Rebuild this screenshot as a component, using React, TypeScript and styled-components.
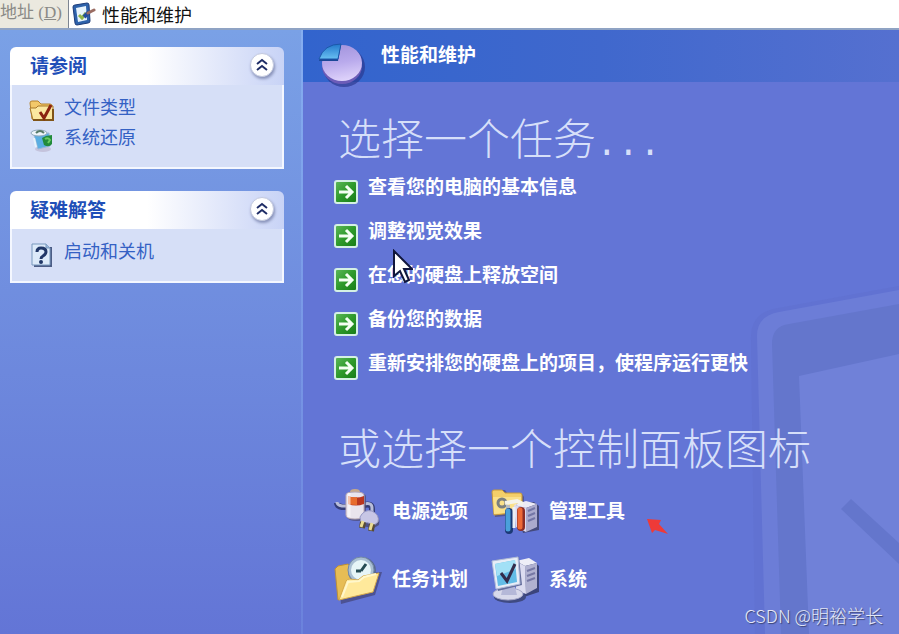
import React from "react";
import styled, { createGlobalStyle } from "styled-components";

const GlobalStyle = createGlobalStyle`
  *, *::before, *::after { box-sizing: border-box; }
  body {
    margin: 0;
    background: #6375d6;
    font-family: "Liberation Sans", "Noto Sans CJK SC", sans-serif;
  }
  h1, h2, ul { margin: 0; padding: 0; }
  ul { list-style: none; }
  svg { display: block; flex: none; }
`;

const Window = styled.div`
  display: flex;
  flex-direction: column;
  min-height: 100vh;
  position: relative;
  overflow: hidden;
`;

const AddressBar = styled.div`
  display: flex;
  height: 30px;
  background: #fff;
  border-bottom: 2px solid #8fa3c4;
`;

const AddressLabel = styled.label`
  width: 69px;
  flex: none;
  background: #ebe9df;
  border-right: 1px solid #7d8591;
  color: #8a8a86;
  font-family: "Liberation Serif", "Noto Sans CJK SC", serif;
  font-size: 17px;
  line-height: 26px;
  white-space: nowrap;
`;

const AddressField = styled.div`
  flex: 1;
  display: flex;
  align-items: center;
  gap: 4px;
  padding-left: 3px;
`;

const AddressInput = styled.input`
  flex: 1;
  min-width: 0;
  border: 0;
  outline: 0;
  padding: 0 0 0 2px;
  background: transparent;
  color: #111;
  font-family: "Noto Sans CJK SC", sans-serif;
  font-size: 18px;
  line-height: 26px;
`;

const Body = styled.div`
  flex: 1;
  display: flex;
`;

const Sidebar = styled.aside`
  width: 301px;
  flex: none;
  display: flex;
  flex-direction: column;
  gap: 22px;
  padding: 17px 17px 17px 10px;
  background: linear-gradient(#7aa1e6, #6375d6);
`;

const Panel = styled.section`
  border-radius: 6px 6px 0 0;
  overflow: hidden;
`;

const PanelHeader = styled.div`
  display: flex;
  align-items: center;
  justify-content: space-between;
  height: 38px;
  padding: 0 10px 3px 20px;
  background: linear-gradient(90deg, #fff 50%, #c8d3f6);
`;

const PanelTitle = styled.h2`
  padding-top: 4px;
  color: #1f4fb8;
  font-size: 19px;
  line-height: 24px;
  font-weight: 700;
`;

const CollapseButton = styled.button`
  width: 24px;
  height: 24px;
  padding: 0;
  display: grid;
  place-items: center;
  border: 1px solid #c3c9de;
  border-radius: 50%;
  background: #fff;
  box-shadow: 1px 2px 3px #8791b8;
`;

const PanelLinks = styled.ul`
  display: flex;
  flex-direction: column;
  gap: 6px;
  padding: 11px 17px 17px;
  background: #d6dff7;
  border: 2px solid #f4f7ff;
  border-top: 0;
`;

const PanelLink = styled.a`
  display: flex;
  align-items: center;
  gap: 10px;
  height: 24px;
  color: #3461c4;
  font-size: 18px;
  line-height: 24px;
  text-decoration: none;

  svg { margin-top: 5px; }
`;

const Main = styled.main`
  flex: 1;
  min-width: 0;
  position: relative;
  display: flex;
  flex-direction: column;
  background: #6375d6;
`;

const Divider = styled.div`
  width: 2px;
  flex: none;
  background: linear-gradient(#86aef0, #6b82dc);
`;

const MainHeader = styled.header`
  display: flex;
  align-items: flex-start;
  gap: 13px;
  height: 52px;
  padding: 12px 15px 0;
  background: linear-gradient(90deg, #3264cd, #4068cd 50%, #5570d0);
`;

const MainTitle = styled.h1`
  color: #fff;
  font-size: 19px;
  line-height: 28px;
  font-weight: 700;
`;

const Backdrop = styled.svg`
  position: absolute;
  right: 0;
  bottom: 0;
`;

const Content = styled.div`
  position: relative;
  padding: 24px 31px 24px;
`;

const Heading = styled.h2`
  height: 60px;
  padding-left: 4px;
  color: #d6dff9;
  font-family: "Noto Sans CJK SC", sans-serif;
  font-size: 43px;
  line-height: 60px;
  font-weight: 300;
  white-space: nowrap;
`;

const Dots = styled.span`
  font-family: "Liberation Mono", monospace;
  font-size: 36px;
  line-height: 24px;
`;

const TaskList = styled.ul`
  display: flex;
  flex-direction: column;
  gap: 20px;
  margin: 14px 0 36px;
`;

const TaskLink = styled.a`
  display: flex;
  align-items: flex-start;
  gap: 10px;
  height: 24px;
  color: #fff;
  font-size: 19px;
  line-height: 16px;
  font-weight: 700;
  text-decoration: none;
  white-space: nowrap;
`;

const AppletGrid = styled.ul`
  display: grid;
  grid-template-columns: 157px 157px;
  gap: 20px 0;
  margin-top: 12px;
`;

const AppletLink = styled.a`
  display: flex;
  align-items: center;
  gap: 10px;
  height: 48px;
  color: #fff;
  font-size: 19px;
  line-height: 24px;
  font-weight: 700;
  text-decoration: none;
  white-space: nowrap;
`;

const Pointer = styled.svg`
  position: absolute;
  left: 391px;
  top: 249px;
`;

const RedMarker = styled.svg`
  position: absolute;
  left: 646px;
  top: 517px;
`;

const Credit = styled.div`
  position: absolute;
  right: 16px;
  bottom: 7px;
  color: #e4e8f6;
  font-family: "Noto Sans CJK SC", sans-serif;
  font-size: 18px;
  line-height: 24px;
  font-weight: 300;
  text-shadow: 1px 1px 1px #39426f;
`;

const ClipboardIcon = () => (
  <svg width="24" height="26" viewBox="0 0 24 26">
    <path d="M3 4 L15 2 Q17 2 17 4 L18 20 Q18 22 16 22 L5 24 Q3 24 3 22 L1 6 Q1 4 3 4Z" fill="#2d62ab" stroke="#1c3b78" />
    <path d="M4 7 L14 5 L15 19 L6 21Z" fill="#e6f3fd" />
    <path d="M7 14l3 3 4-5" fill="none" stroke="#92b648" strokeWidth="3" />
    <path d="M12 16 L17 11" stroke="#244d9c" strokeWidth="4" />
    <path d="M16 12 L22 9" stroke="#9a6c62" strokeWidth="3" strokeLinecap="round" />
  </svg>
);

const ChevronsIcon = () => (
  <svg width="12" height="14" viewBox="0 0 12 14" fill="none" stroke="#1f2d66" strokeWidth="2">
    <path d="M1 6l5-4 5 4M1 12l5-4 5 4" />
  </svg>
);

const FolderCheckIcon = () => (
  <svg width="25" height="22" viewBox="0 0 25 22">
    <path d="M1 3Q1 1 3 1h6l3 3h9q2 0 2 2v13H3Z" fill="#f2c869" stroke="#b5822d" />
    <path d="M1 8h6l2-2h15v14H4Z" fill="#fbe7a0" stroke="#a8782a" />
    <path d="M4 20h20V9" fill="none" stroke="#805418" strokeWidth="2" />
    <path d="M11 12l4 6 7-13" fill="none" stroke="#8c2412" strokeWidth="3" />
  </svg>
);

const RestoreIcon = () => (
  <svg width="25" height="24" viewBox="0 0 25 24">
    <ellipse cx="14" cy="20" rx="8" ry="3" fill="#c4c3dc" />
    <path d="M5 6l15-2 1 13-12 3Z" fill="#5aaee2" stroke="#97b8d8" />
    <ellipse cx="10" cy="4" rx="8" ry="3" fill="#eef4fa" stroke="#91a9bc" />
    <path d="M7 4q4-4 8 0" fill="none" stroke="#587b6a" strokeWidth="2" />
    <path d="M5 9l2 9" stroke="#e6f3fb" strokeWidth="2" />
    <path d="M13 9l4-2 6-1v9q-3 4-8 1Z" fill="#218b3b" />
    <path d="M16 10q3-2 5 1l-2 3" fill="none" stroke="#69cc61" strokeWidth="2" />
  </svg>
);

const HelpIcon = () => (
  <svg width="25" height="25" viewBox="0 0 25 25">
    <path d="M5 24h17V5" fill="none" stroke="#4c5d86" strokeWidth="2" />
    <path d="M3 2h14l4 4v17H3Z" fill="#dceaf9" stroke="#7898bd" />
    <path d="M17 2v4h4" fill="#9cb8dc" stroke="#7898bd" />
    <path d="M8 10q0-4 4-4 5 0 5 4 0 2-3 4-2 1-2 3" fill="none" stroke="#203767" strokeWidth="3" />
    <circle cx="12" cy="20" r="2" fill="#203767" />
  </svg>
);

const PieIcon = () => (
  <svg width="50" height="46" viewBox="0 0 50 46">
    <defs>
      <linearGradient id="pieTop" x1="0.3" y1="0" x2="0.5" y2="1">
        <stop offset="0" stopColor="#a294dc" />
        <stop offset=".5" stopColor="#b9aaec" />
        <stop offset="1" stopColor="#dfd3fb" />
      </linearGradient>
      <linearGradient id="pieSlice" x1="0" y1="0" x2="0" y2="1">
        <stop offset="0" stopColor="#2278cc" />
        <stop offset="1" stopColor="#69c0f2" />
      </linearGradient>
    </defs>
    <ellipse cx="26" cy="25" rx="21" ry="20" fill="#29368c" opacity=".65" />
    <ellipse cx="24" cy="24" rx="20" ry="18" fill="#6c5cb8" />
    <ellipse cx="24" cy="21" rx="20" ry="18" fill="url(#pieTop)" />
    <path d="M23 3l-3 16H1Q5 5 23 3Z" fill="#1b4797" />
    <path d="M23 2l-3 15H1Q6 2 23 2Z" fill="url(#pieSlice)" stroke="#1b57aa" />
  </svg>
);

const ArrowIcon = () => (
  <svg width="24" height="24" viewBox="0 0 24 24">
    <defs>
      <linearGradient id="goFill" x1="0" y1="0" x2="1" y2="1">
        <stop offset="0" stopColor="#5fb95b" />
        <stop offset=".5" stopColor="#2e9a2b" />
        <stop offset="1" stopColor="#167a16" />
      </linearGradient>
    </defs>
    <rect x="1" y="1" width="22" height="22" rx="2" fill="url(#goFill)" stroke="#d4f0e4" strokeWidth="2" />
    <path d="M5 12h12M12 6l6 6-6 6" fill="none" stroke="#f4fff2" strokeWidth="3" />
  </svg>
);

const PowerIcon = () => (
  <svg width="48" height="48" viewBox="0 0 48 48">
    <path d="M14 19H8q-5-1-5-4M30 17q8-2 8 4v6" fill="none" stroke="#333c78" strokeWidth="6" />
    <path d="M14 18H8q-5-1-5-4M30 16q8-2 8 4v6" fill="none" stroke="#b8bdd8" strokeWidth="3" />
    <path d="M14 6h15q3 0 3 3v20q0 4-9 4t-10-4Z" fill="#4c4871" opacity=".7" />
    <path d="M16 4q0-3 5-3t5 3Z" fill="#c8a98a" />
    <path d="M12 7q0-3 9-3t9 3v20q0 4-9 4t-9-4Z" fill="#e9e4ed" stroke="#b9a9b5" />
    <path d="M14 8q8 3 16 0v8q-8 3-16 0Z" fill="#b9361f" />
    <path d="M14 8q4 2 9 1v8q-5 0-9-1Z" fill="#e76b2d" />
    <path d="M15 5v24" stroke="#fff" strokeWidth="3" opacity=".6" />
    <path d="M27 30q4-8 12-6 8 4 6 13l-5 3-13-2Z" fill="#4f5285" />
    <path d="M26 29q4-8 12-6 8 4 6 11l-5 4q-4-5-12-3Z" fill="#c7c6e5" stroke="#9698c5" />
    <path d="M29 34l-1 6M38 36l-1 7" stroke="#594b32" strokeWidth="6" />
    <path d="M29 33l-2 6M38 35l-2 7" stroke="#eadb91" strokeWidth="3" />
  </svg>
);

const ToolsIcon = () => (
  <svg width="48" height="48" viewBox="0 0 48 48">
    <path d="M3 5l3-3h8l3 4h14l2 3v17L4 29Z" fill="#4b4365" opacity=".6" />
    <path d="M1 4q0-2 2-2h8l3 3h15q2 0 2 2v17L3 27Z" fill="#f4cf69" stroke="#c79a3d" />
    <path d="M2 9h28l-1 14-26 3Z" fill="#fbe18a" />
    <path d="M25 16l18-2 5 4v24l-16 3Z" fill="#444a7c" />
    <path d="M23 17l12-4 11 3-11 4Z" fill="#ecebf6" />
    <path d="M35 20l11-4v23l-11 5Z" fill="#aaaacd" />
    <path d="M23 17l12 3v24l-10-5Z" fill="#dcdaf0" />
    <path d="M37 23l7-3M37 28l7-3M37 33l7-3" stroke="#7376a6" strokeWidth="2" />
    <circle cx="11" cy="15" r="4" fill="none" stroke="#7b7f80" strokeWidth="3" />
    <path d="M14 15l12-2 6 3" stroke="#f4f3ea" strokeWidth="4" fill="none" />
    <path d="M17 17v9" stroke="#b9bdc0" strokeWidth="4" />
    <path d="M18 24v18" stroke="#1b3976" strokeWidth="8" strokeLinecap="round" />
    <path d="M17 23v18" stroke="#4aa0db" strokeWidth="5" strokeLinecap="round" />
    <path d="M30 23v16" stroke="#8d2d26" strokeWidth="8" strokeLinecap="round" />
    <path d="M29 22v17" stroke="#ed6937" strokeWidth="5" strokeLinecap="round" />
    <path d="M23 19v21" stroke="#eceff6" strokeWidth="3" />
  </svg>
);

const ScheduleIcon = () => (
  <svg width="48" height="48" viewBox="0 0 48 48">
    <path d="M4 14l11-5 4 5 14 3 15-1-7 23L7 48Z" fill="#3d3b65" opacity=".6" />
    <path d="M1 13l3-3 10-2 3 3 15-1 2 23-30 11Z" fill="#e7bd55" stroke="#be9136" />
    <circle cx="28" cy="15" r="14" fill="#586990" />
    <circle cx="27" cy="14" r="13" fill="#a9bfd2" stroke="#748aa8" />
    <circle cx="27" cy="14" r="10" fill="#e6f5f7" />
    <path d="M27 15l5-7M27 15h-5" stroke="#264c54" strokeWidth="3" />
    <path d="M5 44l7-19q1-2 4-2l8 1 5-4 16-3-6 19Z" fill="#ffe99b" stroke="#d6aa4c" />
    <path d="M8 41l6-15 11-1 5-4 12-3" fill="none" stroke="#fff7cb" strokeWidth="2" />
  </svg>
);

const SystemIcon = () => (
  <svg width="48" height="48" viewBox="0 0 48 48">
    <path d="M27 7l15-2 6 5v26l-15 5Z" fill="#3b447b" />
    <path d="M25 5l13-3 8 5-12 3Z" fill="#eeeef7" />
    <path d="M34 10l12-3v25l-11 6Z" fill="#b0b1d0" />
    <path d="M25 5l9 5 1 28-10-4Z" fill="#dcdcf0" />
    <path d="M36 15l8-3M36 20l8-3M36 25l8-3" stroke="#7678a4" strokeWidth="2" />
    <ellipse cx="19" cy="41" rx="16" ry="6" fill="#3f4a82" />
    <ellipse cx="17" cy="38" rx="15" ry="6" fill="#d8d9eb" stroke="#a5a7c8" />
    <path d="M12 31h12l2 8H10Z" fill="#b5b8d8" />
    <path d="M4 4l24-3 3 28-24 6Z" fill="#656e9c" />
    <path d="M1 5l26-4 2 27-24 5Z" fill="#e8edf7" stroke="#b2bcd9" />
    <path d="M4 8l20-4 2 22-19 4Z" fill="#63bce6" />
    <path d="M4 8l20-4 1 9-19 7Z" fill="#a2e0f6" />
    <path d="M10 17l6 8 8-17" fill="none" stroke="#332c4c" strokeWidth="3" />
  </svg>
);

const seeAlso = [
  { label: "文件类型", icon: <FolderCheckIcon /> },
  { label: "系统还原", icon: <RestoreIcon /> },
];
const troubleshooters = [{ label: "启动和关机", icon: <HelpIcon /> }];

const tasks = [
  "查看您的电脑的基本信息",
  "调整视觉效果",
  "在您的硬盘上释放空间",
  "备份您的数据",
  "重新安排您的硬盘上的项目，使程序运行更快",
];

const applets = [
  { label: "电源选项", icon: <PowerIcon /> },
  { label: "管理工具", icon: <ToolsIcon /> },
  { label: "任务计划", icon: <ScheduleIcon /> },
  { label: "系统", icon: <SystemIcon /> },
];

type PanelProps = { title: string; links: { label: string; icon: React.ReactNode }[] };

const SidePanel = ({ title, links }: PanelProps) => (
  <Panel>
    <PanelHeader>
      <PanelTitle>{title}</PanelTitle>
      <CollapseButton type="button" aria-label={title}>
        <ChevronsIcon />
      </CollapseButton>
    </PanelHeader>
    <PanelLinks>
      {links.map((link) => (
        <li key={link.label}>
          <PanelLink href="#">
            {link.icon}
            {link.label}
          </PanelLink>
        </li>
      ))}
    </PanelLinks>
  </Panel>
);

export default function App() {
  return (
    <>
      <GlobalStyle />
      <Window>
        <AddressBar>
          <AddressLabel htmlFor="address">
            地址 (<u>D</u>)
          </AddressLabel>
          <AddressField>
            <ClipboardIcon />
            <AddressInput id="address" defaultValue="性能和维护" />
          </AddressField>
        </AddressBar>
        <Body>
          <Sidebar>
            <SidePanel title="请参阅" links={seeAlso} />
            <SidePanel title="疑难解答" links={troubleshooters} />
          </Sidebar>
          <Divider />
          <Main>
            <Backdrop width="154" height="354" viewBox="0 0 154 354">
              <path d="M10 354L6 60Q5 35 28 29L154 6V354Z" fill="#5f70ce" opacity=".5" />
              <path d="M20 354L12 56Q12 36 34 32L154 10V354Z" fill="#6c7dd7" />
              <path d="M36 354L27 64Q27 46 44 44L154 24V354Z" fill="#6476cc" />
              <path d="M64 354L54 96L154 74V354Z" fill="#7081d8" />
              <path d="M96 229L106 219L154 263V284Z" fill="#6476cc" />
            </Backdrop>
            <MainHeader>
              <PieIcon />
              <MainTitle>性能和维护</MainTitle>
            </MainHeader>
            <Content>
              <Heading>
                选择一个任务<Dots>...</Dots>
              </Heading>
              <TaskList>
                {tasks.map((task) => (
                  <li key={task}>
                    <TaskLink href="#">
                      <ArrowIcon />
                      {task}
                    </TaskLink>
                  </li>
                ))}
              </TaskList>
              <Heading>或选择一个控制面板图标</Heading>
              <AppletGrid>
                {applets.map((applet) => (
                  <li key={applet.label}>
                    <AppletLink href="#">
                      {applet.icon}
                      {applet.label}
                    </AppletLink>
                  </li>
                ))}
              </AppletGrid>
            </Content>
          </Main>
        </Body>
        <Pointer width="22" height="36" viewBox="0 0 22 36">
          <path d="M3 2v25l6-5 5 11 4-2-5-11h8Z" fill="#fff" stroke="#10163c" strokeWidth="2" />
        </Pointer>
        <RedMarker width="22" height="20" viewBox="0 0 22 20">
          <path d="M1 2l14 1-2 4 9 10-13-4-3 3Z" fill="#ee3a38" />
        </RedMarker>
        <Credit>CSDN @明裕学长</Credit>
      </Window>
    </>
  );
}
